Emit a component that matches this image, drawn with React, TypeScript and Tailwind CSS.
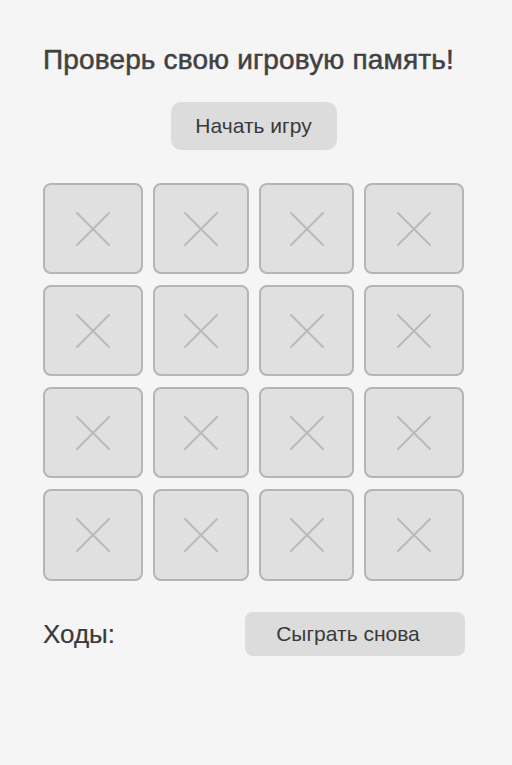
import React from 'react';

const Card = () => (
  <div className="flex items-center justify-center rounded-lg border-2 border-[#b5b5b5] bg-[#e0e0e0]">
    <svg width="34" height="34" viewBox="0 0 34 34" stroke="#bababa" strokeWidth="2" strokeLinecap="round">
      <line x1="1" y1="1" x2="33" y2="33" />
      <line x1="33" y1="1" x2="1" y2="33" />
    </svg>
  </div>
);

const App = () => {
  const cards = Array.from({ length: 16 }, (_, i) => i);

  return (
    <div className="min-h-[765px] bg-[#f5f5f5] px-[43px] pt-[44px] text-[#3f3f3f]" style={{ fontFamily: '"Liberation Sans", Arial, sans-serif' }}>
      <h1 className="text-[28px] leading-[32px] tracking-[0.15px] text-[#414141] [-webkit-text-stroke:0.5px_#414141]">Проверь свою игровую память!</h1>

      <div className="mt-[26px] flex justify-center pr-[5px]">
        <button className="h-[48px] w-[166px] rounded-[10px] bg-[#dcdcdc] text-[21px] text-[#3a3a3a]">Начать игру</button>
      </div>

      <div className="mt-[33px] grid grid-cols-[100px_96px_95px_100px] grid-rows-[91px_91px_91px_92px] gap-x-[10px] gap-y-[11px]">
        {cards.map((i) => (
          <Card key={i} />
        ))}
      </div>

      <div className="mt-[31px] flex items-center justify-between w-[422px]">
        <span className="text-[26px] text-[#3a3a3a] [-webkit-text-stroke:0.2px_#3a3a3a]">Ходы:</span>
        <button className="h-[44px] w-[220px] rounded-[8px] bg-[#dcdcdc] pr-[14px] text-[21px] text-[#3a3a3a]">Сыграть снова</button>
      </div>
    </div>
  );
};

export default App;
